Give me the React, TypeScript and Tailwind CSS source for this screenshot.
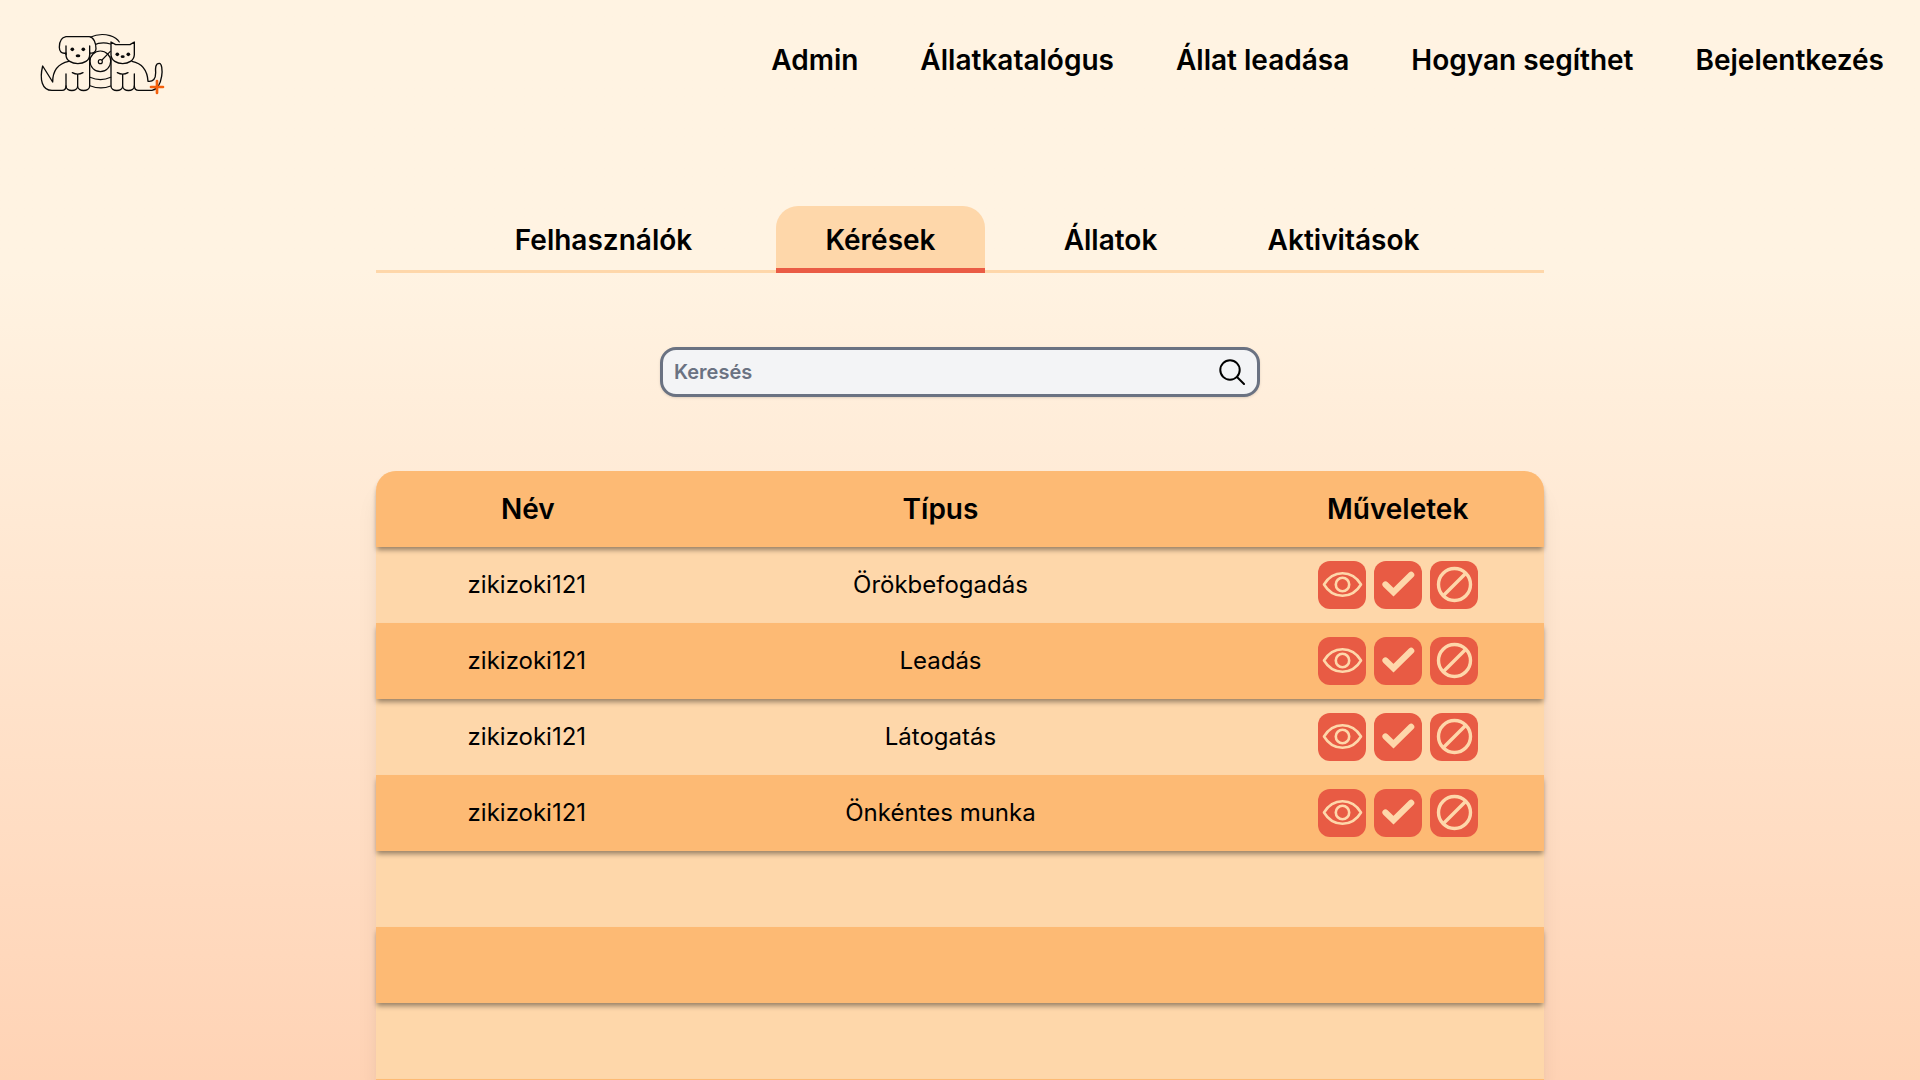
const navItems = ["Admin", "Állatkatalógus", "Állat leadása", "Hogyan segíthet", "Bejelentkezés"];

const tabs = ["Felhasználók", "Kérések", "Állatok", "Aktivitások"];

const requests = [
  { name: "zikizoki121", type: "Örökbefogadás" },
  { name: "zikizoki121", type: "Leadás" },
  { name: "zikizoki121", type: "Látogatás" },
  { name: "zikizoki121", type: "Önkéntes munka" },
  null,
  null,
  null,
  null,
];

function Logo() {
  return (
    <svg viewBox="0 0 450 270" className="h-[90px] w-[150px]" fill="none" stroke="#0a0a0a" strokeWidth="4" strokeLinecap="round" strokeLinejoin="round" role="img" aria-label="Kutya és macska">
      <g strokeWidth="3.5">
        <path d="M180 52 Q210 38 240 47 Q260 53 268 66" />
        <path d="M190 76 Q215 64 241 72" />
        <path d="M180 197 Q212 210 242 198" />
        <path d="M180 172 Q212 186 242 172" />
        <circle cx="211" cy="124" r="31" />
        <circle cx="211" cy="125" r="6" />
        <path d="M216 120 L241 94" />
      </g>
      <path d="M108 50 H178 C192 52 198 70 198 86 C198 96 190 101 179 99 V104 C179 140 108 140 108 104 V99 C94 102 88 94 88 82 C88 62 96 52 108 50 Z" fill="#fff3e2" />
      <path d="M108 78 V104 M179 78 V104" />
      <path d="M243 66 L257 74 H300 L313 66 V104 C311 140 245 140 243 104 Z" fill="#fff3e2" />
      <path d="M116 124 C88 130 68 150 68 186 L38 138 C28 178 36 211 66 211 H96 C104 211 108 206 108 198 V162" />
      <path d="M108 198 C108 216 143 216 143 198 V163 M127 158 Q143 167 159 158 M143 198 C143 216 179 216 179 198 V110" />
      <path d="M243 110 V198 C243 216 278 216 278 198 V163 M262 158 Q278 167 294 158 M278 198 C278 216 313 216 313 198 V162" />
      <path d="M313 198 C313 206 318 211 326 211 H366 C400 206 402 130 388 130 C376 130 376 144 377 158 C377 176 370 186 354 184 C352 150 336 130 306 124" />
      <g fill="#0a0a0a" stroke="none">
        <circle cx="127" cy="88" r="5.5" />
        <circle cx="160" cy="88" r="5.5" />
        <ellipse cx="144" cy="107" rx="7" ry="4.5" />
        <circle cx="262" cy="103" r="5.5" />
        <circle cx="295" cy="103" r="5.5" />
        <ellipse cx="278" cy="110" rx="6" ry="4" />
      </g>
      <path d="M381 183 V219 M363 201 H399" stroke="#f4600c" strokeWidth="8" />
    </svg>
  );
}

function EyeIcon() {
  return (
    <svg viewBox="0 0 48 48" className="size-12" fill="none" stroke="currentColor" strokeWidth="2.6" strokeLinejoin="round" aria-hidden="true">
      <path d="M6 23.5 C15 8.5 34 8.5 43 23.5 C34 38.5 15 38.5 6 23.5 Z" />
      <circle cx="24.5" cy="23.5" r="6.7" />
    </svg>
  );
}

function CheckIcon() {
  return (
    <svg viewBox="0 0 48 48" className="size-12" fill="none" stroke="currentColor" strokeWidth="6.2" aria-hidden="true">
      <path d="M11.5 23.5 L19.5 31.2 L37.2 13.8" strokeLinecap="round" />
    </svg>
  );
}

function BanIcon() {
  return (
    <svg viewBox="0 0 48 48" className="size-12" fill="none" stroke="currentColor" strokeWidth="3.4" aria-hidden="true">
      <circle cx="24.5" cy="23.5" r="16" />
      <path d="M13.2 34.8 L35.8 12.2" />
    </svg>
  );
}

const actions = [
  { label: "Megtekintés", Icon: EyeIcon },
  { label: "Elfogadás", Icon: CheckIcon },
  { label: "Elutasítás", Icon: BanIcon },
];

export default function App() {
  return (
    <div className="flex h-screen flex-col overflow-hidden bg-linear-to-b from-[#fff3e2] from-25% to-[#ffd3b5] font-['Inter',sans-serif] text-black">
      <header className="flex shrink-0 items-center justify-between pt-5 pr-9 pb-2.5 pl-[30px]">
        <a href="#" className="block">
          <Logo />
        </a>
        <nav className="mb-2.5 flex gap-[62px] text-[28px] leading-10 font-semibold">
          {navItems.map((item) => (
            <a key={item} href="#" className="whitespace-nowrap">
              {item}
            </a>
          ))}
        </nav>
      </header>

      <main className="mx-auto flex min-h-0 w-full max-w-[1168px] grow flex-col pt-[86px]">
        <div role="tablist" className="grid shrink-0 grid-cols-[327fr_227fr_233fr_233fr] border-b-3 border-[#fed7aa] pr-[84px] pl-16 text-[28px] leading-10 font-semibold">
          {tabs.map((tab) => {
            const active = tab === "Kérések";
            return (
              <button
                key={tab}
                role="tab"
                aria-selected={active}
                className={
                  active
                    ? "-mb-[3px] justify-self-center rounded-t-[22px] border-b-5 border-[#ea5c45] bg-[#fed7aa] px-[49px] pt-3.5 pb-2"
                    : "-mb-[3px] justify-self-center pt-3.5 pb-[13px]"
                }
              >
                {tab}
              </button>
            );
          })}
        </div>

        <div className="mx-auto mt-[74px] flex h-[50px] w-full max-w-[600px] shrink-0 items-center rounded-2xl border-3 border-gray-500 bg-gray-100 pr-3 pl-[11px] shadow-sm">
          <input type="search" aria-label="Keresés" placeholder="Keresés" className="min-w-0 grow bg-transparent text-xl font-semibold outline-none placeholder:text-gray-500" />
          <button aria-label="Keresés indítása">
            <svg viewBox="0 0 26 26" className="size-[26px]" fill="none" stroke="black" strokeWidth="2" strokeLinecap="round" aria-hidden="true">
              <circle cx="11" cy="11" r="9.7" />
              <path d="M18 18 L25 25" />
            </svg>
          </button>
        </div>

        <div className="mt-[74px] min-h-0 grow rounded-t-[20px] bg-[#fed7aa] shadow-xl">
          <table className="w-full table-fixed border-separate border-spacing-0 text-center text-2xl">
            <colgroup>
              <col className="w-[26%]" />
              <col className="w-[45%]" />
              <col className="w-[29%]" />
            </colgroup>
            <thead>
              <tr className="relative h-[76px] rounded-t-[20px] text-[28px] shadow-[0_4px_5px_-1px_rgba(0,0,0,0.4)]">
                <th className="rounded-tl-[20px] bg-[#fdba74] pt-0.5 font-semibold">Név</th>
                <th className="bg-[#fdba74] pt-0.5 pr-1 font-semibold">Típus</th>
                <th className="rounded-tr-[20px] bg-[#fdba74] pt-0.5 pr-0.5 pl-12 font-semibold">Műveletek</th>
              </tr>
            </thead>
            <tbody>
              {requests.map((request, index) => (
                <tr key={index} className="h-[76px] even:relative even:bg-[#fdba74] even:shadow-[0_4px_5px_-1px_rgba(0,0,0,0.4)]">
                  <td className="pr-0.5">{request?.name}</td>
                  <td className="pr-1">{request?.type}</td>
                  <td className="pr-0.5 pl-12">
                    {request && (
                      <div className="flex justify-center gap-2">
                        {actions.map(({ label, Icon }) => (
                          <button key={label} aria-label={label} className="size-12 rounded-xl bg-[#e85b44] text-[#fed7aa]">
                            <Icon />
                          </button>
                        ))}
                      </div>
                    )}
                  </td>
                </tr>
              ))}
            </tbody>
          </table>
        </div>
      </main>
    </div>
  );
}
